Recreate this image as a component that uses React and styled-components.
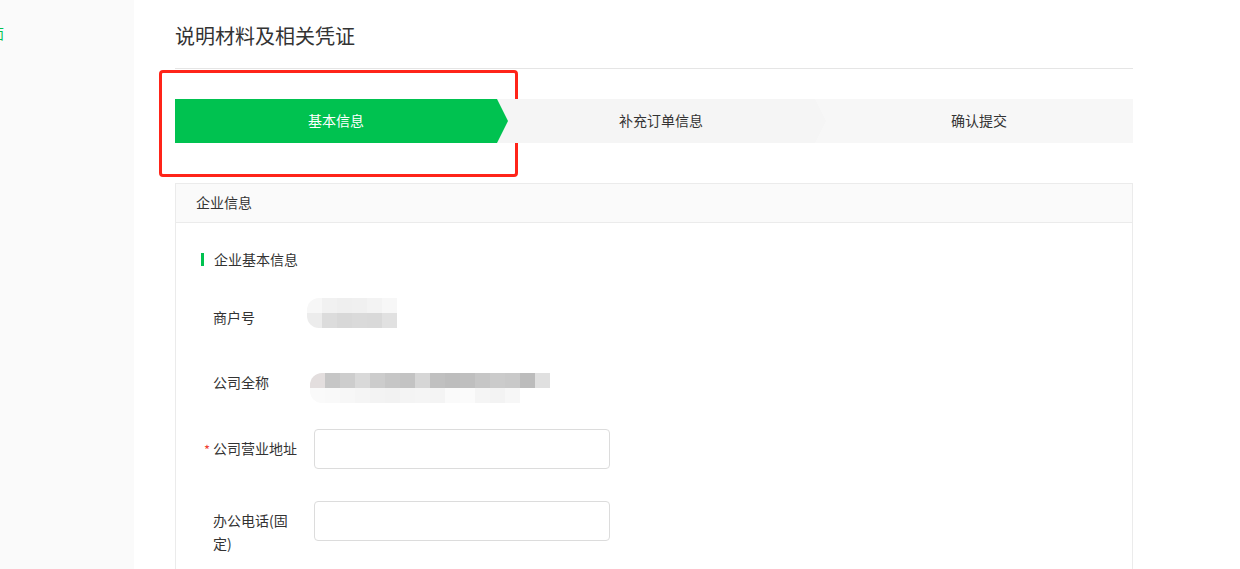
import React from "react";
import styled, { createGlobalStyle } from "styled-components";

const Global = createGlobalStyle`
  html, body { margin: 0; padding: 0; background: #fff; }
  body { font-family: "Noto Sans CJK SC", "Noto Sans", "Liberation Sans", sans-serif; color: #333; font-size: 14px; }
  * { box-sizing: border-box; }
`;

const Page = styled.div`
  display: flex;
  min-height: 100vh;
  position: relative;
  overflow: hidden;
`;

const Sidebar = styled.aside`
  width: 134px;
  flex: none;
  background: #fafafa;
  overflow: hidden;
  padding-top: 23px;
`;

const NavItem = styled.div`
  color: #00c250;
  font-size: 14px;
  line-height: 20px;
  margin-left: -10px;
  white-space: nowrap;
`;

const Main = styled.main`
  width: 999px;
  padding-left: 41px;
  flex: none;
`;

const Header = styled.div`
  padding: 22px 0 18px;
  border-bottom: 1px solid #e5e5e5;
`;

const Title = styled.h1`
  margin: 0;
  font-size: 20px;
  font-weight: 400;
  line-height: 28px;
  color: #333;
`;

const Steps = styled.div`
  display: flex;
  height: 44px;
  margin-top: 30px;
  background: #f7f7f7;
`;

const Step = styled.div`
  position: relative;
  flex: ${(p) => (p.$active ? "0 0 322px" : "1")};
  display: flex;
  align-items: center;
  justify-content: center;
  padding-left: ${(p) => (p.$active ? "0" : "10px")};
  padding-bottom: 2px;
  font-size: 14px;
  color: ${(p) => (p.$active ? "#fff" : "#333")};
  background: ${(p) => (p.$active ? "#00c250" : p.$bg || "#f5f5f5")};
  z-index: ${(p) => p.$z};
  &::after {
    content: "";
    position: absolute;
    top: 0;
    right: -11px;
    width: 0;
    height: 0;
    border-top: 22px solid transparent;
    border-bottom: 22px solid transparent;
    border-left: 11px solid ${(p) => (p.$active ? "#00c250" : p.$bg || "#f5f5f5")};
    display: ${(p) => (p.$last ? "none" : "block")};
  }
`;

const Card = styled.section`
  margin-top: 40px;
  border: 1px solid #ebebeb;
  min-height: 400px;
`;

const CardHeader = styled.div`
  height: 39px;
  background: #fafafa;
  border-bottom: 1px solid #ebebeb;
  padding: 0 0 3px 20px;
  display: flex;
  align-items: center;
  font-size: 14px;
  color: #333;
`;

const CardBody = styled.div`
  padding: 26px 25px 0;
`;

const SectionTitle = styled.div`
  display: flex;
  align-items: center;
  gap: 10px;
  line-height: 20px;
  font-size: 14px;
  color: #333;
  margin-bottom: 29px;
  &::before {
    content: "";
    width: 3px;
    height: 13px;
    background: #00c250;
  }
`;

const Row = styled.div`
  display: flex;
  align-items: flex-start;
  min-height: 40px;
  margin-bottom: ${(p) => p.$mb}px;
`;

const Label = styled.div`
  position: relative;
  width: 113px;
  flex: none;
  padding: 8px 17px 0 12px;
  line-height: 23px;
  font-size: 14px;
  color: #333;
  &::before {
    content: ${(p) => (p.$required ? '"*"' : "none")};
    position: absolute;
    left: 3px;
    top: 9px;
    color: #f04134;
    font-size: 13px;
  }
`;

const Input = styled.input`
  width: 296px;
  height: 40px;
  border: 1px solid #dcdcdc;
  border-radius: 4px;
  background: #fff;
  outline: none;
  padding: 0 10px;
  font-size: 14px;
`;

const Mosaic = styled.div`
  display: flex;
  flex-direction: column;
  margin-left: ${(p) => p.$ml}px;
  margin-top: ${(p) => p.$mt}px;
  filter: blur(0.6px);
  border-radius: 12px 0 0 12px;
  overflow: hidden;
`;

const MosaicRow = styled.div`
  display: flex;
`;

const Cell = styled.span`
  width: 15px;
  height: 15px;
  background: ${(p) => p.$c};
`;

const Annotation = styled.div`
  position: absolute;
  left: 159px;
  top: 70px;
  width: 359px;
  height: 107px;
  border: 3px solid #ff2419;
  border-radius: 4px;
  pointer-events: none;
`;

const m1 = [
  ["#f7f7f7", "#f1f1f1", "#efefef", "#f0f0f0", "#f3f3f3", "#f7f7f7"],
  ["#ececec", "#dcdcdc", "#d8d8d8", "#dadada", "#d9d9d9", "#e1e1e1"],
];
const m2 = [
  ["#e3dede", "#c6c6c6", "#cdcdcd", "#d9d9d9", "#cccccc", "#c6c6c6", "#c3c3c3", "#d6d6d6", "#c0c0c0", "#bdbdbd", "#bfbfbf", "#c6c6c6", "#cbcbcb", "#c9c9c9", "#bcbcbc", "#e0e0e0", "#fff"],
  ["#fafafa", "#f9f9f9", "#f7f7f7", "#f5f5f5", "#f3f3f3", "#f2f2f2", "#f4f4f4", "#f5f5f5", "#f4f4f4", "#fafafa", "#fbfbfb", "#f5f5f5", "#f3f3f3", "#f7f7f7", "#fff", "#fff", "#fff"],
];

function Blur({ data, ml, mt }) {
  return (
    <Mosaic $ml={ml} $mt={mt}>
      {data.map((r, i) => (
        <MosaicRow key={i}>
          {r.map((c, j) => (
            <Cell key={j} $c={c} />
          ))}
        </MosaicRow>
      ))}
    </Mosaic>
  );
}

export default function App() {
  return (
    <Page>
      <Global />
      <Sidebar>
        <NavItem>面</NavItem>
      </Sidebar>
      <Main>
        <Header>
          <Title>说明材料及相关凭证</Title>
        </Header>
        <Steps>
          <Step $active $z={3}>基本信息</Step>
          <Step $z={2} $bg="#f5f5f5">补充订单信息</Step>
          <Step $z={1} $bg="#f7f7f7" $last>确认提交</Step>
        </Steps>
        <Card>
          <CardHeader>企业信息</CardHeader>
          <CardBody>
            <SectionTitle>企业基本信息</SectionTitle>
            <Row $mb={25}>
              <Label>商户号</Label>
              <Blur data={m1} ml={-7} mt={0} />
            </Row>
            <Row $mb={26}>
              <Label>公司全称</Label>
              <Blur data={m2} ml={-4} mt={10} />
            </Row>
            <Row $mb={32}>
              <Label $required>公司营业地址</Label>
              <Input />
            </Row>
            <Row $mb={20}>
              <Label>办公电话(固定)</Label>
              <Input />
            </Row>
          </CardBody>
        </Card>
      </Main>
      <Annotation />
    </Page>
  );
}
